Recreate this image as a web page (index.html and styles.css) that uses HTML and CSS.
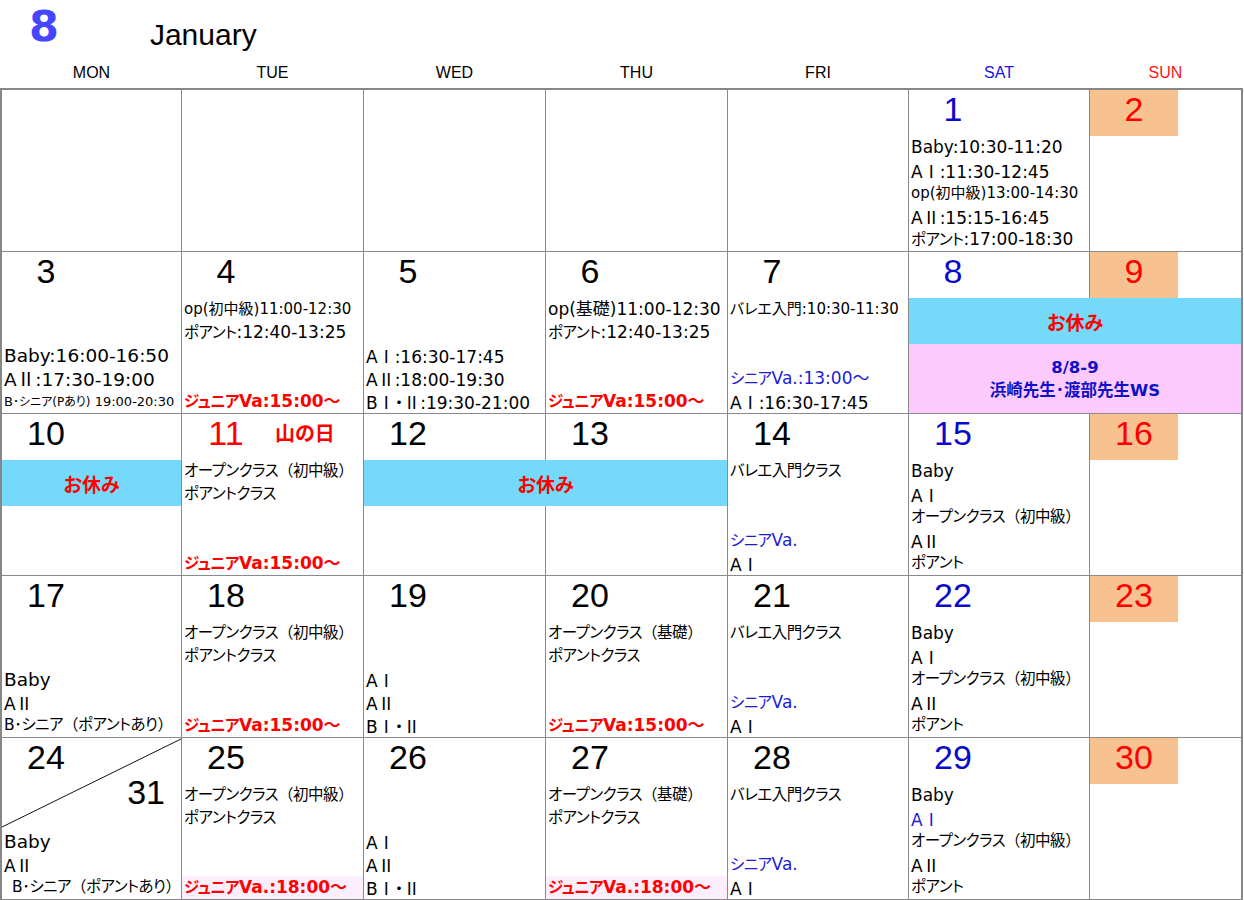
FILE: index.html
```html
<!DOCTYPE html>
<html lang="ja">
<head>
<meta charset="utf-8">
<title>8 January</title>
<link rel="stylesheet" href="styles.css">
</head>
<body>
<div class="title">
  <div class="month">8</div>
  <div class="mname">January</div>
</div>
<div class="dow">
  <div>MON</div><div>TUE</div><div>WED</div><div>THU</div><div>FRI</div><div class="sat-h">SAT</div><div class="sun-h">SUN</div>
</div>
<div class="cal">
  <!-- week 1 -->
  <div class="week">
    <div class="day"></div>
    <div class="day"></div>
    <div class="day"></div>
    <div class="day"></div>
    <div class="day"></div>
    <div class="day sat">
      <div class="date">1</div>
      <div class="slot">Baby:10:30-11:20</div>
      <div class="slot">A<span class="rn">Ⅰ</span>:11:30-12:45</div>
      <div class="slot sm">op(初中級)13:00-14:30</div>
      <div class="slot">A<span class="rn">Ⅱ</span>:15:15-16:45</div>
      <div class="slot"><span class="j">ポアント</span>:17:00-18:30</div>
    </div>
    <div class="day sun"><div class="date">2</div></div>
  </div>
  <!-- week 2 -->
  <div class="week">
    <div class="day">
      <div class="date">3</div>
      <div class="slot"></div>
      <div class="slot"></div>
      <div class="slot lg">Baby:16:00-16:50</div>
      <div class="slot lg">A<span class="rn">Ⅱ</span>:17:30-19:00</div>
      <div class="slot xs">B<span class="jx">･シニア(Pあり)</span> 19:00-20:30</div>
    </div>
    <div class="day">
      <div class="date">4</div>
      <div class="slot sm">op(初中級)11:00-12:30</div>
      <div class="slot"><span class="j">ポアント</span>:12:40-13:25</div>
      <div class="slot"></div>
      <div class="slot"></div>
      <div class="slot jr"><span class="j">ジュニア</span>Va:15:00〜</div>
    </div>
    <div class="day">
      <div class="date">5</div>
      <div class="slot"></div>
      <div class="slot"></div>
      <div class="slot">A<span class="rn">Ⅰ</span>:16:30-17:45</div>
      <div class="slot">A<span class="rn">Ⅱ</span>:18:00-19:30</div>
      <div class="slot">B<span class="rn">Ⅰ</span>・<span class="rn">Ⅱ</span>:19:30-21:00</div>
    </div>
    <div class="day">
      <div class="date">6</div>
      <div class="slot">op(基礎)11:00-12:30</div>
      <div class="slot"><span class="j">ポアント</span>:12:40-13:25</div>
      <div class="slot"></div>
      <div class="slot"></div>
      <div class="slot jr"><span class="j">ジュニア</span>Va:15:00〜</div>
    </div>
    <div class="day">
      <div class="date">7</div>
      <div class="slot sm">バレエ入門:10:30-11:30</div>
      <div class="slot"></div>
      <div class="slot"></div>
      <div class="slot blue"><span class="j">シニア</span>Va.:13:00〜</div>
      <div class="slot">A<span class="rn">Ⅰ</span>:16:30-17:45</div>
    </div>
    <div class="day sat"><div class="date">8</div></div>
    <div class="day sun"><div class="date">9</div></div>
    <div class="band b-satsun">お休み</div>
    <div class="band ws b-satsun-low">
      <div>8/8-9</div>
      <div>浜崎先生･渡部先生WS</div>
    </div>
  </div>
  <!-- week 3 -->
  <div class="week">
    <div class="day"><div class="date">10</div></div>
    <div class="day">
      <div class="dhead"><div class="date red">11</div><div class="holiday">山の日</div></div>
      <div class="slot j">オープンクラス<span class="fw">（</span>初中級<span class="fw">）</span></div>
      <div class="slot j">ポアントクラス</div>
      <div class="slot"></div>
      <div class="slot"></div>
      <div class="slot jr"><span class="j">ジュニア</span>Va:15:00〜</div>
    </div>
    <div class="day"><div class="date">12</div></div>
    <div class="day"><div class="date">13</div></div>
    <div class="day">
      <div class="date">14</div>
      <div class="slot j">バレエ入門クラス</div>
      <div class="slot"></div>
      <div class="slot"></div>
      <div class="slot blue"><span class="j">シニア</span>Va.</div>
      <div class="slot">A<span class="rn">Ⅰ</span></div>
    </div>
    <div class="day sat">
      <div class="date">15</div>
      <div class="slot">Baby</div>
      <div class="slot">A<span class="rn">Ⅰ</span></div>
      <div class="slot j">オープンクラス<span class="fw">（</span>初中級<span class="fw">）</span></div>
      <div class="slot">A<span class="rn">Ⅱ</span></div>
      <div class="slot j">ポアント</div>
    </div>
    <div class="day sun"><div class="date">16</div></div>
    <div class="band b-mon">お休み</div>
    <div class="band b-wedthu">お休み</div>
  </div>
  <!-- week 4 -->
  <div class="week">
    <div class="day">
      <div class="date">17</div>
      <div class="slot"></div>
      <div class="slot"></div>
      <div class="slot lg">Baby</div>
      <div class="slot">A<span class="rn">Ⅱ</span></div>
      <div class="slot j">B･シニア<span class="fw">（</span>ポアントあり<span class="fw">）</span></div>
    </div>
    <div class="day">
      <div class="date">18</div>
      <div class="slot j">オープンクラス<span class="fw">（</span>初中級<span class="fw">）</span></div>
      <div class="slot j">ポアントクラス</div>
      <div class="slot"></div>
      <div class="slot"></div>
      <div class="slot jr"><span class="j">ジュニア</span>Va:15:00〜</div>
    </div>
    <div class="day">
      <div class="date">19</div>
      <div class="slot"></div>
      <div class="slot"></div>
      <div class="slot">A<span class="rn">Ⅰ</span></div>
      <div class="slot">A<span class="rn">Ⅱ</span></div>
      <div class="slot">B<span class="rn">Ⅰ</span>・<span class="rn">Ⅱ</span></div>
    </div>
    <div class="day">
      <div class="date">20</div>
      <div class="slot j">オープンクラス<span class="fw">（</span>基礎<span class="fw">）</span></div>
      <div class="slot j">ポアントクラス</div>
      <div class="slot"></div>
      <div class="slot"></div>
      <div class="slot jr"><span class="j">ジュニア</span>Va:15:00〜</div>
    </div>
    <div class="day">
      <div class="date">21</div>
      <div class="slot j">バレエ入門クラス</div>
      <div class="slot"></div>
      <div class="slot"></div>
      <div class="slot blue"><span class="j">シニア</span>Va.</div>
      <div class="slot">A<span class="rn">Ⅰ</span></div>
    </div>
    <div class="day sat">
      <div class="date">22</div>
      <div class="slot">Baby</div>
      <div class="slot">A<span class="rn">Ⅰ</span></div>
      <div class="slot j">オープンクラス<span class="fw">（</span>初中級<span class="fw">）</span></div>
      <div class="slot">A<span class="rn">Ⅱ</span></div>
      <div class="slot j">ポアント</div>
    </div>
    <div class="day sun"><div class="date">23</div></div>
  </div>
  <!-- week 5 -->
  <div class="week">
    <div class="day">
      <svg class="diag" viewBox="0 0 179 92" preserveAspectRatio="none"><line x1="0" y1="89" x2="179" y2="1" stroke="#111" stroke-width="1"/></svg>
      <div class="date">24</div>
      <div class="alt-date">31</div>
      <div class="slot lg">Baby</div>
      <div class="slot">A<span class="rn">Ⅱ</span></div>
      <div class="slot j indent">B･シニア<span class="fw">（</span>ポアントあり<span class="fw">）</span></div>
    </div>
    <div class="day">
      <div class="date">25</div>
      <div class="slot j">オープンクラス<span class="fw">（</span>初中級<span class="fw">）</span></div>
      <div class="slot j">ポアントクラス</div>
      <div class="slot"></div>
      <div class="slot"></div>
      <div class="slot jr hl"><span class="j">ジュニア</span>Va.:18:00〜</div>
    </div>
    <div class="day">
      <div class="date">26</div>
      <div class="slot"></div>
      <div class="slot"></div>
      <div class="slot">A<span class="rn">Ⅰ</span></div>
      <div class="slot">A<span class="rn">Ⅱ</span></div>
      <div class="slot">B<span class="rn">Ⅰ</span>・<span class="rn">Ⅱ</span></div>
    </div>
    <div class="day">
      <div class="date">27</div>
      <div class="slot j">オープンクラス<span class="fw">（</span>基礎<span class="fw">）</span></div>
      <div class="slot j">ポアントクラス</div>
      <div class="slot"></div>
      <div class="slot"></div>
      <div class="slot jr hl"><span class="j">ジュニア</span>Va.:18:00〜</div>
    </div>
    <div class="day">
      <div class="date">28</div>
      <div class="slot j">バレエ入門クラス</div>
      <div class="slot"></div>
      <div class="slot"></div>
      <div class="slot blue"><span class="j">シニア</span>Va.</div>
      <div class="slot">A<span class="rn">Ⅰ</span></div>
    </div>
    <div class="day sat">
      <div class="date">29</div>
      <div class="slot">Baby</div>
      <div class="slot blue">A<span class="rn">Ⅰ</span></div>
      <div class="slot j">オープンクラス<span class="fw">（</span>初中級<span class="fw">）</span></div>
      <div class="slot">A<span class="rn">Ⅱ</span></div>
      <div class="slot j">ポアント</div>
    </div>
    <div class="day sun"><div class="date">30</div></div>
  </div>
</div>
</body>
</html>
```

FILE: styles.css
```css
* { box-sizing: border-box; }

body {
  margin: 0;
  background: #ffffff;
  color: #000000;
  font-family: "DejaVu Sans", "Noto Sans CJK JP", sans-serif;
  font-feature-settings: "palt";
}

.title {
  display: flex;
  align-items: flex-start;
  height: 58px;
  padding-left: 29px;
}

.month {
  font: bold 43px/43px "DejaVu Sans", sans-serif;
  color: #4646ff;
  margin-top: 5px;
}

.mname {
  font: 30px/30px "Liberation Sans", sans-serif;
  margin-top: 20px;
  margin-left: 91px;
}

.dow {
  width: 1243px;
  display: grid;
  grid-template-columns: 179px 181px 181px 181px 180px 180px 151px;
  column-gap: 1px;
  padding: 0 2px;
  height: 30px;
  font: 16px/30px "Liberation Sans", sans-serif;
  text-align: center;
}

.sat-h { color: #1414ee; }
.sun-h { color: #ff1414; }

.cal {
  width: 1243px;
  border: 2px solid #878787;
  background: #8a8a8a;
  display: flex;
  flex-direction: column;
  row-gap: 1px;
}

.week {
  display: grid;
  grid-template-columns: 179px 181px 181px 181px 180px 180px 151px;
  grid-template-rows: 46px 46px 69px;
  column-gap: 1px;
}

.day {
  grid-row: 1 / -1;
  background: #ffffff;
  overflow: hidden;
  position: relative;
}

.week > .day:nth-child(1) { grid-column: 1; }
.week > .day:nth-child(2) { grid-column: 2; }
.week > .day:nth-child(3) { grid-column: 3; }
.week > .day:nth-child(4) { grid-column: 4; }
.week > .day:nth-child(5) { grid-column: 5; }
.week > .day:nth-child(6) { grid-column: 6; }
.week > .day:nth-child(7) { grid-column: 7; }

.date {
  width: 88px;
  height: 46px;
  text-align: center;
  font: 34px/38px "Liberation Sans", sans-serif;
}

.sat .date { color: #0a0acc; }
.sun .date { background: #f8c190; color: #ff0000; }
.date.red { color: #ff0000; }

.dhead {
  display: flex;
  align-items: flex-start;
  height: 46px;
}

.holiday {
  margin-left: 5px;
  color: #ff0000;
  font-weight: bold;
  font-size: 20px;
  line-height: 40px;
}

.slot {
  height: 23px;
  line-height: 23px;
  padding-left: 2px;
  white-space: nowrap;
  font-size: 17px;
}

.slot.sm { font-size: 15px; }
.slot.xs { font-size: 13px; }
.slot.lg { font-size: 18.5px; }
.slot.j { font-size: 15.5px; letter-spacing: -0.5px; }
.slot.indent { padding-left: 10px; }

.j { font-size: 15.5px; letter-spacing: -0.5px; }
.jx { font-size: 12px; }
.fw { font-feature-settings: normal; }
.rn {
  font-family: "Noto Sans CJK JP", sans-serif;
  font-feature-settings: normal;
}

.jr { color: #ff0000; font-weight: bold; }
.blue { color: #1c1cd6; }
.hl { background: #fdeefd; }

.alt-date {
  height: 46px;
  text-align: right;
  padding-right: 16px;
  font: 34px/16px "Liberation Sans", sans-serif;
}

.diag {
  position: absolute;
  left: 0;
  top: 0;
  width: 100%;
  height: 92px;
}

.band {
  position: relative;
  display: flex;
  align-items: center;
  justify-content: center;
  background: #74d9fb;
  color: #ff0000;
  font-weight: bold;
  font-size: 19px;
}

.band.ws {
  flex-direction: column;
  background: #fdcafd;
  color: #1010c8;
  font-size: 16.5px;
  line-height: 23px;
}

.b-satsun { grid-column: 6 / 8; grid-row: 2; }
.b-satsun-low { grid-column: 6 / 8; grid-row: 3; }
.b-mon { grid-column: 1 / 2; grid-row: 2; }
.b-wedthu { grid-column: 3 / 5; grid-row: 2; }
```
